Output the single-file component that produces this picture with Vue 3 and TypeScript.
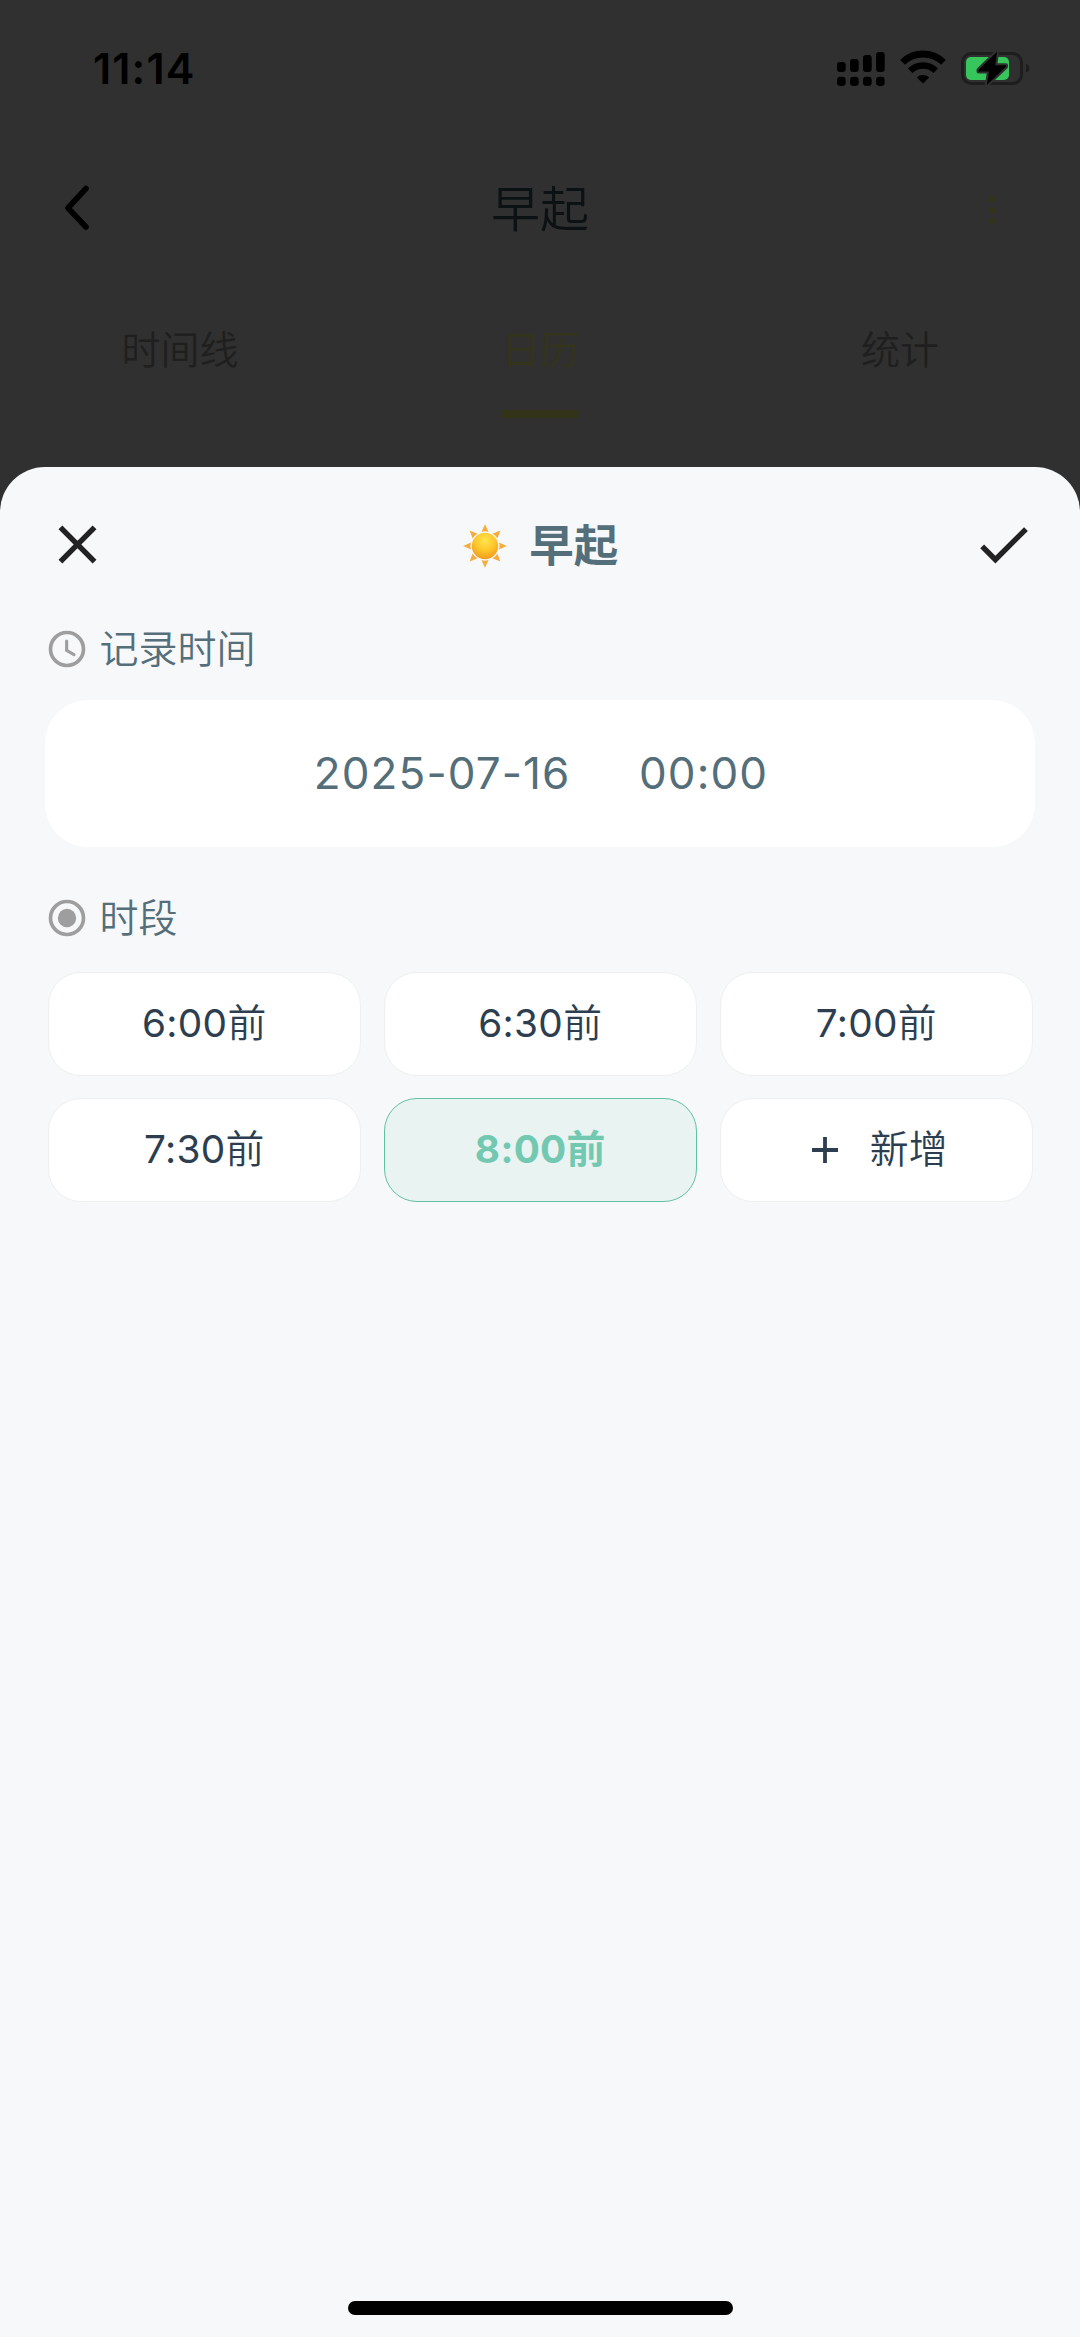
<script setup lang="ts">
import { ref } from 'vue'

interface Tab {
  label: string
  active: boolean
}

const tabs: Tab[] = [
  { label: '时间线', active: false },
  { label: '日历', active: true },
  { label: '统计', active: false },
]

const periods: string[] = ['6:00', '6:30', '7:00', '7:30', '8:00']
const selected = ref<string>('8:00')
</script>

<template>
  <div class="screen">
    <header class="status-bar">
      <span class="clock">11:14</span>
      <div class="status-icons">
        <svg class="signal" width="48" height="34" viewBox="0 0 48 34">
          <rect x="0" y="10" width="8.7" height="10" rx="3" />
          <rect x="13" y="7" width="8.7" height="13" rx="3" />
          <rect x="26" y="3" width="8.7" height="17" rx="3" />
          <rect x="39" y="0" width="8.7" height="20" rx="3" />
          <rect x="0" y="24.7" width="8.7" height="9.3" rx="3.4" />
          <rect x="13" y="24.7" width="8.7" height="9.3" rx="3.4" />
          <rect x="26" y="24.7" width="8.7" height="9.3" rx="3.4" />
          <rect x="39" y="24.7" width="8.7" height="9.3" rx="3.4" />
        </svg>
        <svg class="wifi" width="46" height="34" viewBox="0 0 46 34">
          <path d="M2.6 12.4a29 29 0 0 1 40.8 0" fill="none" stroke="#000" stroke-width="6.8" />
          <path d="M10.2 20.8a18.2 18.2 0 0 1 25.6 0" fill="none" stroke="#000" stroke-width="6.4" />
          <path d="M23 33.6l-6.2-6.2a9.2 9.2 0 0 1 12.4 0z" />
        </svg>
        <svg class="battery" width="69" height="36" viewBox="0 0 69 36">
          <rect x="1.5" y="3.5" width="59" height="30" rx="9" fill="none" stroke="#1e1e1e" stroke-width="3" />
          <path d="M65 14v8.6c2.4-.8 3.4-2.4 3.4-4.3S67.4 14.8 65 14z" fill="#1e1e1e" />
          <rect x="5" y="7" width="43" height="23" rx="5" fill="#36c65b" />
          <path
            d="M36 1.8 17.5 20v1.5H28L25.8 35 45 16.7v-1.5H34.3z"
            stroke="#303030"
            stroke-width="4"
            stroke-linejoin="round"
            paint-order="stroke"
          />
        </svg>
      </div>
    </header>

    <nav class="nav-bar">
      <svg class="back" width="30" height="48" viewBox="0 0 30 48">
        <path d="M24 4.5 6 24 24 43" fill="none" stroke="#000" stroke-width="5.6" stroke-linecap="round" stroke-linejoin="round" />
      </svg>
      <h1 class="page-title">早起</h1>
      <div class="more"><i></i><i></i><i></i></div>
    </nav>

    <div class="tabs">
      <div v-for="tab in tabs" :key="tab.label" class="tab" :class="{ active: tab.active }">
        <span>{{ tab.label }}</span>
      </div>
    </div>

    <main class="sheet">
      <div class="sheet-head">
        <svg class="action" width="65" height="65" viewBox="0 0 24 24">
          <path d="M19 6.41 17.59 5 12 10.59 6.41 5 5 6.41 10.59 12 5 17.59 6.41 19 12 13.41 17.59 19 19 17.59 13.41 12z" />
        </svg>
        <div class="sheet-title">
          <svg class="sun" width="44" height="44" viewBox="0 0 44 44">
            <defs>
              <radialGradient id="sunFace" cx="0.5" cy="0.3" r="0.7">
                <stop offset="0" stop-color="#ffe44d" />
                <stop offset="0.55" stop-color="#fdc62a" />
                <stop offset="1" stop-color="#f39a1e" />
              </radialGradient>
            </defs>
            <path
              v-for="n in 8"
              :key="n"
              d="M22 .2 25.5 8Q22 6.6 18.5 8z"
              fill="#f6ac3a"
              :transform="`rotate(${n * 45} 22 22)`"
            />
            <circle cx="22" cy="22" r="13.2" fill="url(#sunFace)" />
          </svg>
          <h2>早起</h2>
        </div>
        <svg class="action" width="65" height="65" viewBox="0 0 24 24">
          <path d="M9 16.17 4.83 12l-1.42 1.41L9 19 21 7l-1.41-1.41z" />
        </svg>
      </div>

      <div class="section-label time-label">
        <svg width="44" height="44" viewBox="0 0 24 24">
          <circle cx="12" cy="12" r="9" fill="none" stroke="#9e9e9e" stroke-width="2" />
          <path d="M11.8 7.6v5.2l4 2.3" fill="none" stroke="#9e9e9e" stroke-width="1.7" stroke-linecap="round" />
        </svg>
        <span>记录时间</span>
      </div>

      <div class="time-card">
        <span class="date">2025-07-16</span>
        <span class="hour">00:00</span>
      </div>

      <div class="section-label period-label">
        <svg width="44" height="44" viewBox="0 0 24 24">
          <circle cx="12" cy="12" r="9" fill="none" stroke="#9e9e9e" stroke-width="2" />
          <circle cx="12" cy="12" r="5" fill="#9e9e9e" />
        </svg>
        <span>时段</span>
      </div>

      <div class="period-grid">
        <button
          v-for="period in periods"
          :key="period"
          class="chip"
          :class="{ selected: period === selected }"
          @click="selected = period"
        >
          <span>{{ period }}<span class="suffix">前</span></span>
        </button>
        <button class="chip add">
          <svg width="26" height="26" viewBox="0 0 26 26">
            <path d="M13 0v26M0 13h26" stroke="#2c3e50" stroke-width="3.8" />
          </svg>
          <span>新增</span>
        </button>
      </div>

      <div class="home-indicator"></div>
    </main>
  </div>
</template>

<style>
body {
  margin: 0;
  background: #303030;
}
</style>

<style scoped>
.screen {
  display: flex;
  flex-direction: column;
  width: 1080px;
  height: 2337px;
  overflow: hidden;
  background: #303030;
  font-family: Inter, "Noto Sans CJK SC", sans-serif;
}

.status-bar {
  display: flex;
  justify-content: space-between;
  box-sizing: border-box;
  height: 138px;
  padding: 42px 50px 0 93px;
}

.clock {
  font-size: 43px;
  line-height: 52px;
  font-weight: 600;
  letter-spacing: 1.1px;
  color: #000;
}

.status-icons {
  display: flex;
  align-items: flex-start;
  padding-top: 1px;
}

.signal {
  margin-top: 9px;
}

.wifi {
  margin: 7px 0 0 14.5px;
}

.battery {
  margin: 7px 0 0 15.5px;
}

.nav-bar {
  display: grid;
  grid-template-columns: 1fr auto 1fr;
  align-items: center;
  box-sizing: border-box;
  height: 140px;
  padding: 0 85px 0 62px;
}

.page-title {
  margin: 4px 0 0 23px;
  font-size: 49px;
  line-height: 70px;
  font-weight: 350;
  color: #0c1214;
}

.more {
  display: flex;
  flex-direction: column;
  justify-self: end;
  gap: 5px;
  margin-top: 4px;
}

.more i {
  width: 6px;
  height: 6px;
  border-radius: 3px;
  background: #343418;
}

.tabs {
  display: grid;
  grid-template-columns: repeat(3, 1fr);
  height: 189px;
}

.tab {
  display: flex;
  flex-direction: column;
  align-items: center;
  padding-top: 47px;
  font-size: 39px;
  line-height: 50px;
  font-weight: 350;
  color: #1f1f1f;
}

.tab.active {
  color: #34341c;
}

.tab.active::after {
  content: "";
  width: 78px;
  height: 8px;
  margin-top: 35px;
  border-radius: 4px;
  background: #333319;
}

.sheet {
  display: flex;
  flex-direction: column;
  flex: 1;
  border-radius: 45px 45px 0 0;
  background: #f7f8fa;
}

.sheet-head {
  display: flex;
  align-items: center;
  justify-content: space-between;
  height: 65px;
  margin-top: 45px;
  padding: 0 44px 0 45px;
}

.action {
  fill: #222;
}

.sheet-title {
  display: flex;
  align-items: center;
  gap: 22.5px;
}

.sun {
  margin-top: 2px;
}

.sheet-title h2 {
  margin: 3px 0 0;
  font-size: 44.5px;
  line-height: 64px;
  font-weight: 700;
  color: #546e7a;
}

.section-label {
  display: flex;
  align-items: center;
  gap: 11px;
  height: 44px;
  padding-left: 44.5px;
  font-size: 39px;
  line-height: 50px;
  font-weight: 350;
  color: #546e7a;
}

.section-label span {
  padding-bottom: 1px;
}

.time-label {
  margin-top: 50px;
}

.time-card {
  display: flex;
  align-items: center;
  justify-content: center;
  gap: 68.5px;
  box-sizing: border-box;
  height: 147px;
  margin: 29px 45px 0;
  padding: 0 0 2px 2px;
  border-radius: 43px;
  background: #fff;
  font-size: 44px;
  letter-spacing: 1.1px;
  color: #546e7a;
}

.period-label {
  margin-top: 49px;
}

.period-grid {
  display: grid;
  grid-template-columns: repeat(3, 1fr);
  grid-auto-rows: 104px;
  gap: 22px 22.5px;
  margin: 32px 47px 0 47.5px;
}

.chip {
  display: flex;
  align-items: center;
  justify-content: center;
  box-sizing: border-box;
  padding: 0;
  border: 1px solid #eef0f0;
  border-radius: 33px;
  background: #fff;
  font-family: inherit;
  font-size: 38.8px;
  line-height: 50px;
  font-weight: 400;
  letter-spacing: 0.3px;
  color: #2c3e50;
}

.chip > span {
  padding-bottom: 2px;
}

.suffix {
  font-weight: 350;
}

.chip.selected {
  border-color: #62c0a3;
  background: #e8f3f2;
  font-weight: 700;
  color: #72c8b0;
}

.chip.selected .suffix {
  font-weight: 700;
}

.chip.add {
  gap: 32px;
  padding-left: 7px;
  font-weight: 350;
}

.home-indicator {
  width: 385px;
  height: 14px;
  margin: auto auto 22px;
  border-radius: 7px;
  background: #000;
}
</style>
